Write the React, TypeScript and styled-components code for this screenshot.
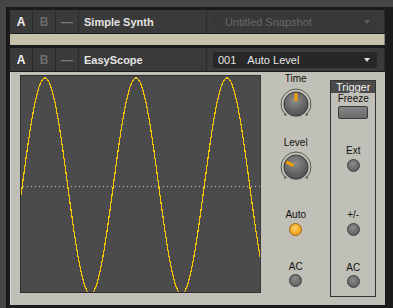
import styled, { createGlobalStyle } from 'styled-components';

const Global = createGlobalStyle`
  html, body {
    margin: 0;
    padding: 0;
    background: #1b1b1b;
  }
  body {
    font-family: 'Liberation Sans', Arial, sans-serif;
  }
`;

const Frame = styled.div`
  width: 393px;
  height: 308px;
  overflow: hidden;
  background: #464646;
  padding: 7px 0 0 6px;
  box-sizing: border-box;
`;

const Rack = styled.div`
  background: #1b1b1b;
  height: 100%;
  padding: 3px 0 0 3px;
  box-sizing: border-box;
  display: flex;
  flex-direction: column;
  border-left: 1px solid #0e0e0e;
`;

const Slot = styled.div`
  width: 375px;
  display: flex;
  flex-direction: column;
`;

const HeaderRow = styled.div<{ $gap: number }>`
  display: flex;
  height: 23px;
  margin-bottom: ${(p) => p.$gap}px;
  background: #3a3a3a;
  border-right: 1px solid #2a2a2a;
`;

const Cell = styled.div<{ $w: number; $tone: 'on' | 'off' | 'dash' }>`
  width: ${(p) => p.$w}px;
  display: flex;
  align-items: center;
  justify-content: center;
  border-right: 1px solid #2a2a2a;
  font-size: 12px;
  font-weight: bold;
  color: ${(p) => (p.$tone === 'on' ? '#f2f2f2' : p.$tone === 'off' ? '#6c6c6c' : '#7a7a7a')};
`;

const NameCell = styled.div`
  width: 128px;
  display: flex;
  align-items: center;
  padding-left: 5px;
  box-sizing: border-box;
  border-right: 1px solid #2a2a2a;
  font-size: 11px;
  font-weight: bold;
  color: #e4e4e4;
`;

const PresetArea = styled.div`
  flex: 1;
  display: flex;
  align-items: center;
  padding: 0 7px 0 6px;
`;

const Dropdown = styled.div<{ $dim?: boolean }>`
  flex: 1;
  height: 16px;
  border-radius: 2px;
  background: ${(p) => (p.$dim ? '#383838' : '#272727')};
  display: flex;
  align-items: center;
  padding: 0 7px 0 ${(p) => (p.$dim ? 12 : 5)}px;
  font-size: 11px;
  color: ${(p) => (p.$dim ? '#686868' : '#e6e6e6')};
  position: relative;
`;

const PresetNum = styled.span`
  margin-right: 11px;
`;

const Arrow = styled.span<{ $dim?: boolean }>`
  position: absolute;
  right: 7px;
  top: 6px;
  width: 0;
  height: 0;
  border-left: 3px solid transparent;
  border-right: 3px solid transparent;
  border-top: 4px solid ${(p) => (p.$dim ? '#5e5e5e' : '#e0e0e0')};
`;

const Strip = styled.div`
  height: 11px;
  background: #c6c1ab;
  margin-bottom: 3px;
  border-right: 1px solid #8a8778;
`;

const Panel = styled.div`
  height: 233px;
  background: #c1c0b8;
  display: flex;
  padding: 3px 9px 0 9px;
  box-sizing: border-box;
  border-left: 1px solid #d8d7d0;
`;

const Scope = styled.div`
  width: 241px;
  height: 218px;
  background: #4b4b4b;
  border-top: 1px solid #2e2e2e;
  border-left: 1px solid #2e2e2e;
  border-bottom: 1px solid #2e2e2e;
  border-right: 1px solid #3a3a3a;
  box-sizing: border-box;
`;

const Column = styled.div`
  width: 70px;
  display: flex;
  flex-direction: column;
  align-items: center;
`;

const Label = styled.div<{ $top: number }>`
  margin-top: ${(p) => p.$top}px;
  height: 12px;
  line-height: 12px;
  font-size: 10px;
  color: #111;
`;

const TriggerBox = styled.div`
  width: 46px;
  height: 217px;
  margin-top: 5px;
  border: 1px solid #333;
  box-sizing: border-box;
  display: flex;
  flex-direction: column;
  align-items: center;
`;

const TriggerTitle = styled.div`
  align-self: stretch;
  height: 12px;
  line-height: 12px;
  background: #4a4a4a;
  color: #f2f2f2;
  font-size: 11px;
  text-align: center;
`;

const FreezeButton = styled.div`
  margin-top: 1px;
  width: 30px;
  height: 13px;
  border-radius: 2px;
  border: 1px solid #3a3a3a;
  box-sizing: border-box;
  background: linear-gradient(#858585, #6a6a6a);
`;

const Led = styled.div<{ $on?: boolean; $top: number }>`
  margin-top: ${(p) => p.$top}px;
  width: 13px;
  height: 13px;
  border-radius: 50%;
  box-sizing: border-box;
  border: 1px solid ${(p) => (p.$on ? '#9a6410' : '#3c3c3c')};
  background: ${(p) =>
    p.$on
      ? 'radial-gradient(circle at 45% 40%, #ffd36a, #f7a520 60%, #e08a10)'
      : 'radial-gradient(circle at 45% 35%, #8a8a8a, #6a6a6a 60%, #5a5a5a)'};
`;

function Knob({ angle, top }: { angle: number; top: number }) {
  const c = 17;
  const rad = ((angle - 90) * Math.PI) / 180;
  const pt = (r: number, a: number) => {
    const t = ((a - 90) * Math.PI) / 180;
    return [c + r * Math.cos(t), c + r * Math.sin(t)];
  };
  const [sx, sy] = pt(15, -135);
  const [ex, ey] = pt(15, 135);
  return (
    <svg width="34" height="34" style={{ marginTop: top }}>
      <defs>
        <radialGradient id={`kg${angle}`} cx="45%" cy="35%" r="70%">
          <stop offset="0%" stopColor="#8c8c8c" />
          <stop offset="100%" stopColor="#4c4c4c" />
        </radialGradient>
      </defs>
      <path
        d={`M ${sx} ${sy} A 15 15 0 1 1 ${ex} ${ey}`}
        fill="none"
        stroke="#5c5c58"
        strokeWidth="1"
      />
      <circle cx={sx} cy={sy} r="1.2" fill="#555" />
      <circle cx={ex} cy={ey} r="1.2" fill="#555" />
      <circle cx={c} cy={c + 1} r="12.5" fill="#9a9992" opacity="0.6" />
      <circle cx={c} cy={c} r="12" fill={`url(#kg${angle})`} stroke="#3a3a3a" strokeWidth="1" />
      <line
        x1={c + 3 * Math.cos(rad)}
        y1={c + 3 * Math.sin(rad)}
        x2={c + 11 * Math.cos(rad)}
        y2={c + 11 * Math.sin(rad)}
        stroke="#f5a000"
        strokeWidth="3"
      />
    </svg>
  );
}

function Wave() {
  const pts: string[] = [];
  for (let x = 0; x <= 240; x += 0.5) {
    const px = x + 18;
    const y = 110 - 108 * Math.sin((2 * Math.PI * (px - 19.25)) / 91);
    pts.push(`${x.toFixed(1)},${y.toFixed(1)}`);
  }
  return (
    <svg width="239" height="216">
      <line x1="2" y1="110.5" x2="239" y2="110.5" stroke="#c0c0c0" strokeWidth="1" strokeDasharray="1 3" />
      <polyline
        points={pts.join(' ')}
        fill="none"
        stroke="#f7c600"
        strokeWidth="1.2"
        shapeRendering="crispEdges"
      />
    </svg>
  );
}

export default function App() {
  return (
    <>
      <Global />
      <Frame>
        <Rack>
          <Slot>
            <HeaderRow $gap={1}>
              <Cell $w={22} $tone="on">A</Cell>
              <Cell $w={22} $tone="off">B</Cell>
              <Cell $w={22} $tone="dash">—</Cell>
              <NameCell>Simple Synth</NameCell>
              <PresetArea>
                <Dropdown $dim>
                  Untitled Snapshot
                  <Arrow $dim />
                </Dropdown>
              </PresetArea>
            </HeaderRow>
            <Strip />
            <HeaderRow $gap={1}>
              <Cell $w={22} $tone="on">A</Cell>
              <Cell $w={22} $tone="off">B</Cell>
              <Cell $w={22} $tone="dash">—</Cell>
              <NameCell>EasyScope</NameCell>
              <PresetArea>
                <Dropdown>
                  <PresetNum>001</PresetNum>Auto Level
                  <Arrow />
                </Dropdown>
              </PresetArea>
            </HeaderRow>
            <Panel>
              <Scope>
                <Wave />
              </Scope>
              <Column>
                <Label $top={-2}>Time</Label>
                <Knob angle={0} top={2} />
                <Label $top={16}>Level</Label>
                <Knob angle={-62} top={1} />
                <Label $top={25}>Auto</Label>
                <Led $on $top={2} />
                <Label $top={25}>AC</Label>
                <Led $top={1} />
              </Column>
              <TriggerBox>
                <TriggerTitle>Trigger</TriggerTitle>
                <Label $top={0}>Freeze</Label>
                <FreezeButton />
                <Label $top={26}>Ext</Label>
                <Led $top={2} />
                <Label $top={37}>+/-</Label>
                <Led $top={2} />
                <Label $top={26}>AC</Label>
                <Led $top={1} />
              </TriggerBox>
            </Panel>
          </Slot>
        </Rack>
      </Frame>
    </>
  );
}
